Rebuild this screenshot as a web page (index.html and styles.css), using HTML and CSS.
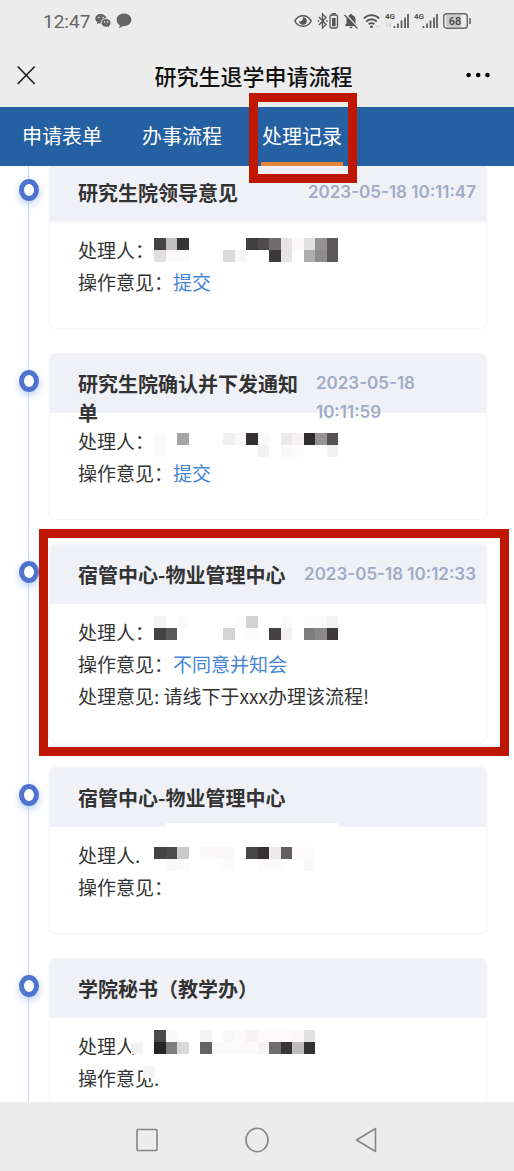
FILE: index.html
```html
<!DOCTYPE html>
<html lang="zh-CN">
<head>
  <meta charset="UTF-8">
  <meta name="viewport" content="width=device-width, initial-scale=1.0">
  <title>研究生退学申请流程</title>
  <link rel="stylesheet" href="styles.css">
</head>
<body>
  <!-- Phone status bar -->
  <div class="status-bar">
    <div class="status-left">
      <span class="clock">12:47</span>
      <svg width="16" height="16" viewBox="0 0 16 16">
        <path fill="#666" d="M6 1C2.700 1 .3 3 .3 5.700c0 1.500.8 2.700 2 3.600L1.800 11.300l2-1.100c.7.2 1.300.3 2 .3C5.400 7.200 8 5 11.400 5.200 10.900 2.700 8.700 1 6 1z"/>
        <path fill="#666" d="M11 6c-2.600 0-4.500 1.700-4.500 3.900s2 3.800 4.500 3.800c.6 0 1.100-.1 1.600-.3l1.700.9-.4-1.500c1-.7 1.700-1.700 1.700-2.900C15.600 7.700 13.600 6 11 6z"/>
        <g fill="#ececec"><circle cx="4" cy="4.500" r=".8"/><circle cx="8" cy="4.500" r=".8"/><circle cx="9.500" cy="9" r=".7"/><circle cx="12.600" cy="9" r=".7"/></g>
      </svg>
      <svg width="16" height="16" viewBox="0 0 16 16">
        <path fill="#666" d="M8 .5C3.900.5.600 3.200.600 6.800c0 2.400 1.300 4.300 3.300 5.400L3 15.300l4.200-2.200c4.700.3 8.200-2.500 8.200-6.300C15.400 3.200 12.100.5 8 .5z"/>
      </svg>
    </div>
    <div class="status-right">
      <svg width="18" height="18" viewBox="0 0 18 18">
        <path fill="none" stroke="#555" stroke-width="1.500" d="M.8 9C2.600 5.600 5.500 3.700 9 3.700S15.400 5.600 17.200 9c-1.800 3.400-4.700 5.300-8.200 5.300S2.600 12.400.8 9z"/>
        <path fill="#555" d="M9 5.200A3.800 3.800 0 1 1 5.200 9c1.500 1 4-.2 3.800-3.800z"/>
      </svg>
      <svg width="22" height="18" viewBox="0 0 22 18">
        <path fill="none" stroke="#555" stroke-width="1.300" d="M2 5l7 7.500-3.500 3.500V2L9 5.500 2 13"/>
        <path fill="#555" d="M.7 8.200h1.500v1.500H.7zM9.200 8.200h1.500v1.500H9.200z"/>
        <rect x="13" y="3" width="7.500" height="13" rx="1.500" fill="none" stroke="#555" stroke-width="1.300"/>
        <path fill="#555" d="M14.800 1h4v1.500h-4zM15 6h3.600v8.300H15z"/>
      </svg>
      <svg width="14" height="18" viewBox="0 0 14 18">
        <path fill="#555" d="M7 2c-.7 0-1.200.5-1.200 1.100C3.700 3.700 2.500 5.300 2.500 7.500v4L1 13.500V14h12v-.5l-1.500-2v-4c0-2.200-1.200-3.800-3.300-4.400C8.200 2.500 7.700 2 7 2zM5.500 14.700h3a1.500 1.500 0 0 1-3 0z"/>
        <path stroke="#ececec" stroke-width="1.300" d="M1.500 2L14 15.500"/>
        <path stroke="#555" stroke-width="1.300" d="M.5 3L13.500 16.500"/>
      </svg>
      <svg width="17" height="18" viewBox="0 0 17 18">
        <path fill="none" stroke="#555" stroke-width="1.800" d="M.8 6.500c4.300-4.500 11.100-4.500 15.400 0M3.200 9.500c3-3 7.600-3 10.600 0M5.700 12.300c1.600-1.600 4-1.600 5.600 0"/>
        <circle cx="8.500" cy="14.800" r="1.400" fill="#555"/>
        <path stroke="#ccc" stroke-width="1.500" d="M12.500 14.500h4"/>
      </svg>
      <svg width="24" height="18" viewBox="0 0 24 18">
        <text class="net" x="0" y="7">4G</text>
        <path stroke="#c4c4c4" d="M2 11v4M5 11v4"/>
        <path stroke="#555" stroke-width="1.700" d="M9.500 14v2M13 11.500V16M16.500 8.500V16M20 5.500V16M23 2v14"/>
      </svg>
      <svg width="24" height="18" viewBox="0 0 24 18">
        <text class="net" x="0" y="7">4G</text>
        <path stroke="#555" stroke-width="1.700" d="M9.500 14v2M13 11.500V16M16.500 8.500V16M20 5.500V16M23 2v14"/>
      </svg>
      <svg width="29" height="18" viewBox="0 0 29 18">
        <path fill="#c9c9c9" d="M3 3h15v12H3z"/>
        <rect x=".8" y="1.800" width="23.500" height="14.400" rx="3" fill="none" stroke="#666" stroke-width="1.400"/>
        <path stroke="#666" stroke-width="1.600" d="M27 6v6"/>
        <text class="charge" x="12" y="13" text-anchor="middle">68</text>
      </svg>
    </div>
  </div>

  <header class="title-bar">
    <button type="button" class="icon-btn" aria-label="关闭">
      <svg width="24" height="24" viewBox="0 0 24 24"><path stroke="#222" stroke-width="1.700" d="M.7 3.500l17 17.500M17.700 3.500L.7 21"/></svg>
    </button>
    <h1>研究生退学申请流程</h1>
    <button type="button" class="icon-btn" aria-label="更多">
      <svg width="24" height="24" viewBox="0 0 24 24"><circle cx="2.600" cy="12" r="2.300"/><circle cx="12.200" cy="12" r="2.300"/><circle cx="21.400" cy="12" r="2.300"/></svg>
    </button>
  </header>

  <nav class="tabs">
    <a href="#form" class="tab">申请表单</a>
    <a href="#flow" class="tab">办事流程</a>
    <a href="#records" class="tab active">处理记录<span class="mark mark-tab"></span></a>
  </nav>

  <main class="records" id="records">
    <ul class="timeline">
      <li class="step">
        <article class="card">
          <div class="card-head">
            <h2>研究生院领导意见</h2>
            <time>2023-05-18 10:11:47</time>
          </div>
          <div class="card-body">
            <div class="row">
              <span class="label">处理人：</span>
              <svg class="mosaic middle" viewBox="0 0 16 2" preserveAspectRatio="none">
                <path fill="#444" d="M0 0h1v1H0z"/><path fill="#c0bebf" d="M1 0h1v1H1z"/><path fill="#373435" d="M2 0h1v1H2z"/>
                <path fill="#434041" d="M8 0h1v1H8z"/><path fill="#4d4b4c" d="M9 0h1v1H9z"/><path fill="#6e6c6d" d="M10 0h1v1h-1z"/>
                <path fill="#e5e3e4" d="M11 0h1v2h-1z"/><path fill="#faf8f9" d="M12 0h1v1h-1z"/><path fill="#e1e1e1" d="M13 0h1v1h-1z"/>
                <path fill="#949293" d="M14 0h1v1h-1z"/><path fill="#5a5859" d="M15 0h1v2h-1z"/>
                <path fill="#e0dee0" d="M0 1h1v1H0z"/><path fill="#fcfafc" d="M1 1h2v1H1z"/><path fill="#dbdbdb" d="M6 1h1v1H6z"/>
                <path fill="#f8f6f7" d="M7 1h1v1H7z"/><path fill="#3c393a" d="M10 1h1v1h-1z"/><path fill="#aeaeae" d="M13 1h1v1h-1z"/>
                <path fill="#8e8c8d" d="M14 1h1v1h-1z"/>
              </svg>
            </div>
            <div class="row"><span class="label">操作意见：</span><span class="result">提交</span></div>
          </div>
        </article>
      </li>

      <li class="step">
        <article class="card">
          <div class="card-head">
            <h2>研究生院确认并下发通知单</h2>
            <time>2023-05-18 10:11:59</time>
          </div>
          <div class="card-body">
            <div class="row">
              <span class="label">处理人：</span>
              <svg class="mosaic bottom" viewBox="0 0 16 2" preserveAspectRatio="none">
                <path fill="#fafafa" d="M0 0h1v2H0z"/><path fill="#a5a5a5" d="M2 0h1v1H2z"/><path fill="#f0eff0" d="M6 0h1v1H6z"/>
                <path fill="#f9f7f8" d="M7 0h1v1H7z"/><path fill="#343132" d="M8 0h1v1H8z"/><path fill="#faf8f9" d="M9 0h1v1H9z"/>
                <path fill="#ebe9ea" d="M11 0h1v1h-1z"/><path fill="#f4f2f3" d="M12 0h1v1h-1z"/><path fill="#2f2c2d" d="M13 0h1v1h-1z"/>
                <path fill="#959394" d="M14 0h1v1h-1z"/><path fill="#555354" d="M15 0h1v1h-1z"/>
                <path fill="#f2f2f2" d="M9 1h1v1H9zM15 1h1v1h-1z"/><path fill="#f8f8f8" d="M11 1h1v1h-1z"/><path fill="#fcfafb" d="M12 1h1v1h-1z"/>
              </svg>
            </div>
            <div class="row"><span class="label">操作意见：</span><span class="result">提交</span></div>
          </div>
        </article>
      </li>

      <li class="step">
        <article class="card">
          <div class="card-head">
            <h2>宿管中心-物业管理中心</h2>
            <time>2023-05-18 10:12:33</time>
          </div>
          <div class="card-body">
            <div class="row">
              <span class="label">处理人：</span>
              <svg class="mosaic" viewBox="0 0 16 2" preserveAspectRatio="none">
                <path fill="#f3f3f3" d="M0 0h1v1H0zM15 0h1v1h-1z"/><path fill="#fbfbfb" d="M2 0h1v1H2zM7 0h1v1H7zM11 0h1v1h-1zM13 0h2v1h-2z"/>
                <path fill="#d3d3d3" d="M8 0h1v1H8z"/><path fill="#424242" d="M0 1h1v1H0z"/><path fill="#5b595a" d="M1 1h1v1H1z"/>
                <path fill="#d5d4d5" d="M6 1h1v1H6z"/><path fill="#fcfafb" d="M8 1h1v1H8z"/><path fill="#454243" d="M10 1h1v1h-1z"/>
                <path fill="#f2f0f1" d="M11 1h1v1h-1z"/><path fill="#7c7c7c" d="M13 1h1v1h-1z"/><path fill="#8a888a" d="M14 1h1v1h-1z"/>
                <path fill="#3e3b3c" d="M15 1h1v1h-1z"/>
              </svg>
            </div>
            <div class="row"><span class="label">操作意见：</span><span class="result">不同意并知会</span></div>
            <div class="row">处理意见: 请线下于xxx办理该流程!</div>
          </div>
          <span class="mark mark-card"></span>
        </article>
      </li>

      <li class="step">
        <article class="card">
          <div class="card-head">
            <h2>宿管中心-物业管理中心</h2>
          </div>
          <div class="card-body">
            <div class="row">
              <span class="label">处理人.</span>
              <svg class="mosaic bottom" viewBox="0 0 16 2" preserveAspectRatio="none">
                <path fill="#fff" d="M1-2h15v2H1z"/>
                <path fill="#454445" d="M0 0h1v1H0z"/><path fill="#4d4b4c" d="M1 0h1v1H1z"/><path fill="#cacaca" d="M2 0h1v1H2z"/>
                <path fill="#f9f7f8" d="M4 0h3v1H4zM1 1h1v1H1zM13 1h1v1h-1z"/><path fill="#484546" d="M8 0h1v1H8z"/><path fill="#353233" d="M9 0h1v1H9z"/>
                <path fill="#edebec" d="M10 0h1v1h-1z"/><path fill="#625f61" d="M11 0h1v1h-1z"/><path fill="#fcfafb" d="M12 0h2v1h-2zM2 1h1v1H2zM6 1h1v1H6zM9 1h2v1H9z"/>
              </svg>
            </div>
            <div class="row"><span class="label">操作意见：</span></div>
          </div>
        </article>
      </li>

      <li class="step">
        <article class="card">
          <div class="card-head">
            <h2>学院秘书（教学办）</h2>
          </div>
          <div class="card-body">
            <div class="row">
              <span class="label">处理人</span>
              <svg class="mosaic" viewBox="0 0 16 2" preserveAspectRatio="none">
                <path fill="#f3f3f3" d="M-2 1h1v1h-1zM-1 3h1v1h-1z"/>
                <path fill="#4b4b4b" d="M0 0h1v1H0z"/><path fill="#faf8f9" d="M1 0h1v1H1zM12 0h1v1h-1z"/><path fill="#f5f3f4" d="M4 0h1v1H4zM8 0h1v1H8zM9 1h1v1H9z"/>
                <path fill="#f8f8f8" d="M6 0h1v1H6z"/><path fill="#fcfafb" d="M7 0h1v1H7zM9 0h3v1H9zM5 1h4v1H5z"/><path fill="#e3e1e2" d="M13 0h1v1h-1z"/>
                <path fill="#252525" d="M0 1h1v1H0z"/><path fill="#7f7d7e" d="M1 1h1v1H1z"/><path fill="#d9d9d9" d="M2 1h1v1H2z"/>
                <path fill="#656364" d="M4 1h1v1H4z"/><path fill="#6e6c6d" d="M10 1h1v1h-1z"/><path fill="#393637" d="M11 1h1v1h-1z"/>
                <path fill="#bdbbbc" d="M12 1h1v1h-1z"/><path fill="#353233" d="M13 1h1v1h-1z"/>
              </svg>
            </div>
            <div class="row"><span class="label">操作意见.</span></div>
          </div>
        </article>
      </li>
    </ul>
  </main>

  <!-- Android navigation keys -->
  <footer class="nav-keys">
    <button type="button" class="icon-btn" aria-label="最近任务">
      <svg width="24" height="26" viewBox="0 0 24 26"><rect x="2" y="2.500" width="20" height="21" rx="1" fill="none" stroke="#858585" stroke-width="1.600"/></svg>
    </button>
    <button type="button" class="icon-btn" aria-label="主屏幕">
      <svg width="24" height="26" viewBox="0 0 24 26"><ellipse cx="12" cy="13" rx="11" ry="11.700" fill="none" stroke="#858585" stroke-width="1.600"/></svg>
    </button>
    <button type="button" class="icon-btn" aria-label="返回">
      <svg width="24" height="26" viewBox="0 0 24 26"><path fill="none" stroke="#858585" stroke-width="1.600" stroke-linejoin="round" d="M20.500 1.500v23L1.500 13z"/></svg>
    </button>
  </footer>
</body>
</html>
```

FILE: styles.css
```css
*,
*::before,
*::after {
  box-sizing: border-box;
}
body {
  display: flex;
  flex-direction: column;
  height: 100vh;
  margin: 0;
  background: #fff;
  color: #333;
  font-family: "Noto Sans CJK SC", sans-serif;
}
svg {
  display: block;
  flex: none;
}
.icon-btn {
  padding: 0;
  border: none;
  background: none;
  cursor: pointer;
}

/* status bar */
.status-bar {
  display: flex;
  justify-content: space-between;
  align-items: center;
  height: 42px;
  padding: 0 42px 0 43px;
  background: #ececec;
}
.status-left,
.status-right {
  display: flex;
  align-items: center;
  gap: 5px;
}
.clock {
  color: #666;
  font-family: Roboto, sans-serif;
  font-size: 19px;
}
.net {
  fill: #555;
  font: bold 8px Roboto, sans-serif;
}
.charge {
  fill: #444;
  font: 500 11px Roboto, sans-serif;
}

/* title bar */
.title-bar {
  display: flex;
  align-items: center;
  height: 65px;
  padding: 0 24px 0 17px;
  background: #ececec;
}
.title-bar h1 {
  flex: 1;
  margin: 0;
  color: #111;
  font-size: 22px;
  font-weight: 500;
  text-align: center;
}

/* tabs */
.tabs {
  display: flex;
  gap: 38px;
  height: 59px;
  padding-left: 21px;
  background: #2460a2;
}
.tab {
  position: relative;
  padding: 0 1px;
  color: #fff;
  font-size: 20px;
  line-height: 58px;
  text-decoration: none;
}
.tab.active {
  border-bottom: 4px solid #e8833a;
}

/* red highlight boxes */
.mark {
  position: absolute;
  z-index: 2;
  border: 9px solid #c01800;
  pointer-events: none;
}
.mark-tab {
  inset: -14px -14px -21px -12px;
}
.mark-card {
  inset: -16px -23px -14px -11px;
}

/* timeline */
.records {
  flex: 1;
  min-height: 0;
  overflow: hidden;
}
.timeline {
  margin: -3px 0 0;
  padding: 0;
  list-style: none;
}
.step {
  position: relative;
  padding: 0 28px 26px 50px;
}
.step::before {
  content: "";
  position: absolute;
  top: 0;
  bottom: 0;
  left: 28px;
  width: 1px;
  background: #c9dcf2;
}
.step::after {
  content: "";
  position: absolute;
  top: 16px;
  left: 19px;
  width: 20px;
  height: 22px;
  border: 5px solid #4f74cf;
  border-radius: 50%;
  background: #fff;
  box-shadow: 0 3px 8px rgba(79, 130, 220, 0.4);
}
.card {
  position: relative;
  z-index: 1;
  border-radius: 5px;
  box-shadow: 0 0 2px rgba(60, 70, 100, 0.2);
}
.card-head {
  display: flex;
  justify-content: space-between;
  gap: 10px;
  height: 59px;
  padding: 15px 10px 0 28px;
  border-radius: 5px 5px 0 0;
  background: #f0f1f7;
  line-height: 29px;
}
.card-head h2 {
  margin: 0;
  font-size: 20px;
  font-weight: bold;
}
.card-head time {
  color: #a0abc6;
  font-family: Inter, sans-serif;
  font-size: 17px;
  font-weight: 600;
}
.card-body {
  padding: 12px 28px 30px;
  font-size: 19px;
}
.row {
  display: flex;
  height: 32px;
  line-height: 32px;
}
.label {
  min-width: 76px;
}
.result {
  color: #4384d4;
}

/* pixelated names */
.mosaic {
  position: relative;
  width: 184px;
  height: 24px;
  overflow: visible;
  shape-rendering: crispEdges;
}
.mosaic.middle {
  align-self: center;
}
.mosaic.bottom {
  align-self: flex-end;
}

/* bottom keys */
.nav-keys {
  display: flex;
  justify-content: center;
  align-items: center;
  gap: 86px;
  height: 69px;
  padding-top: 6px;
  background: #ececec;
}
```
